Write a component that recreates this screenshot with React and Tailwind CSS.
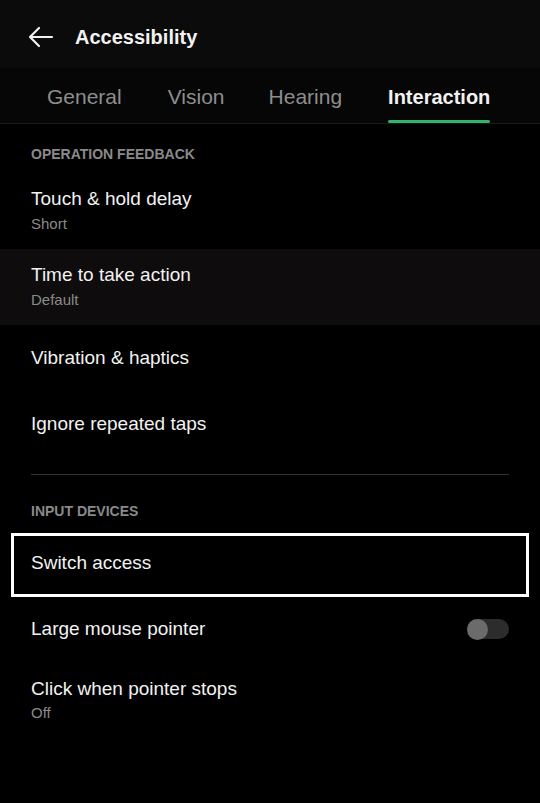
import React from "react";

const font = { fontFamily: '"Liberation Sans", Arial, sans-serif' };

function TwoLine({ title, sub, highlight }) {
  return (
    <div className={`h-[76px] px-[31px] pt-[14px] ${highlight ? "bg-[#0e0c0d]" : ""}`}>
      <div className="text-[19px] leading-[24px] text-[#f2f2f2]">{title}</div>
      <div className="mt-[3px] text-[15px] leading-[20px] text-[#8a8a8a]">{sub}</div>
    </div>
  );
}

function OneLine({ title, children }) {
  return (
    <div className="h-[66px] px-[31px] flex items-center justify-between">
      <div className="text-[19px] leading-[24px] text-[#f2f2f2]">{title}</div>
      {children}
    </div>
  );
}

export default function App() {
  return (
    <div className="w-[540px] h-[803px] bg-black overflow-hidden" style={font}>
      {/* Header */}
      <div className="h-[68px] bg-[#0b0b0b] flex items-center pl-[28px] pt-[6px]">
        <svg width="26" height="22" viewBox="0 0 26 22" className="mr-[21px]">
          <path d="M2 11 H24 M11 2 L2 11 L11 20" stroke="#f0f0f0" strokeWidth="2.2" fill="none" strokeLinecap="round" strokeLinejoin="round" />
        </svg>
        <div className="text-[20px] font-bold text-[#f2f2f2] leading-[24px]">Accessibility</div>
      </div>
      {/* Tabs */}
      <div className="h-[56px] bg-[#060606] border-b border-[#1a1a1a] flex items-end pl-[47px]">
        <div className="h-[55px] flex items-center text-[21px] text-[#8e8e8e] pt-[2px]">General</div>
        <div className="h-[55px] flex items-center text-[21px] text-[#8e8e8e] ml-[46px] pt-[2px]">Vision</div>
        <div className="h-[55px] flex items-center text-[21px] text-[#8e8e8e] ml-[44px] pt-[2px]">Hearing</div>
        <div className="h-[55px] flex flex-col ml-[46px]">
          <div className="flex-1 flex items-center text-[20px] font-bold text-[#f2f2f2] pt-[5px]">Interaction</div>
          <div className="h-[3px] rounded-full bg-[#34b36c]"></div>
        </div>
      </div>
      {/* Section 1 */}
      <div className="h-[49px] px-[31px] pt-[21px] text-[14px] leading-[18px] font-bold text-[#8a8a8a]">OPERATION FEEDBACK</div>
      <TwoLine title="Touch & hold delay" sub="Short" />
      <TwoLine title="Time to take action" sub="Default" highlight />
      <OneLine title="Vibration & haptics" />
      <OneLine title="Ignore repeated taps" />
      <div className="h-[36px] px-[31px] pt-[17px]">
        <div className="h-[1px] bg-[#333333]"></div>
      </div>
      <div className="h-[40px] px-[31px] pt-[9px] text-[14px] leading-[18px] font-bold text-[#8a8a8a]">INPUT DEVICES</div>
      <div className="px-[11px]">
        <div className="h-[64px] border-[3px] border-white flex items-center px-[17px] pb-[4px]">
          <div className="text-[19px] leading-[24px] text-[#f2f2f2]">Switch access</div>
        </div>
      </div>
      <div className="h-[64px] px-[31px] flex items-center justify-between">
        <div className="text-[19px] leading-[24px] text-[#f2f2f2]">Large mouse pointer</div>
        <div className="w-[42px] h-[20px] rounded-full bg-[#2c2c2c] relative">
          <div className="absolute left-0 top-[-0.5px] w-[21px] h-[21px] rounded-full bg-[#6b6b6b]"></div>
        </div>
      </div>
      <div className="h-[76px] px-[31px] pt-[16px]">
        <div className="text-[19px] leading-[24px] text-[#f2f2f2]">Click when pointer stops</div>
        <div className="mt-[2px] text-[15px] leading-[20px] text-[#8a8a8a]">Off</div>
      </div>
    </div>
  );
}
